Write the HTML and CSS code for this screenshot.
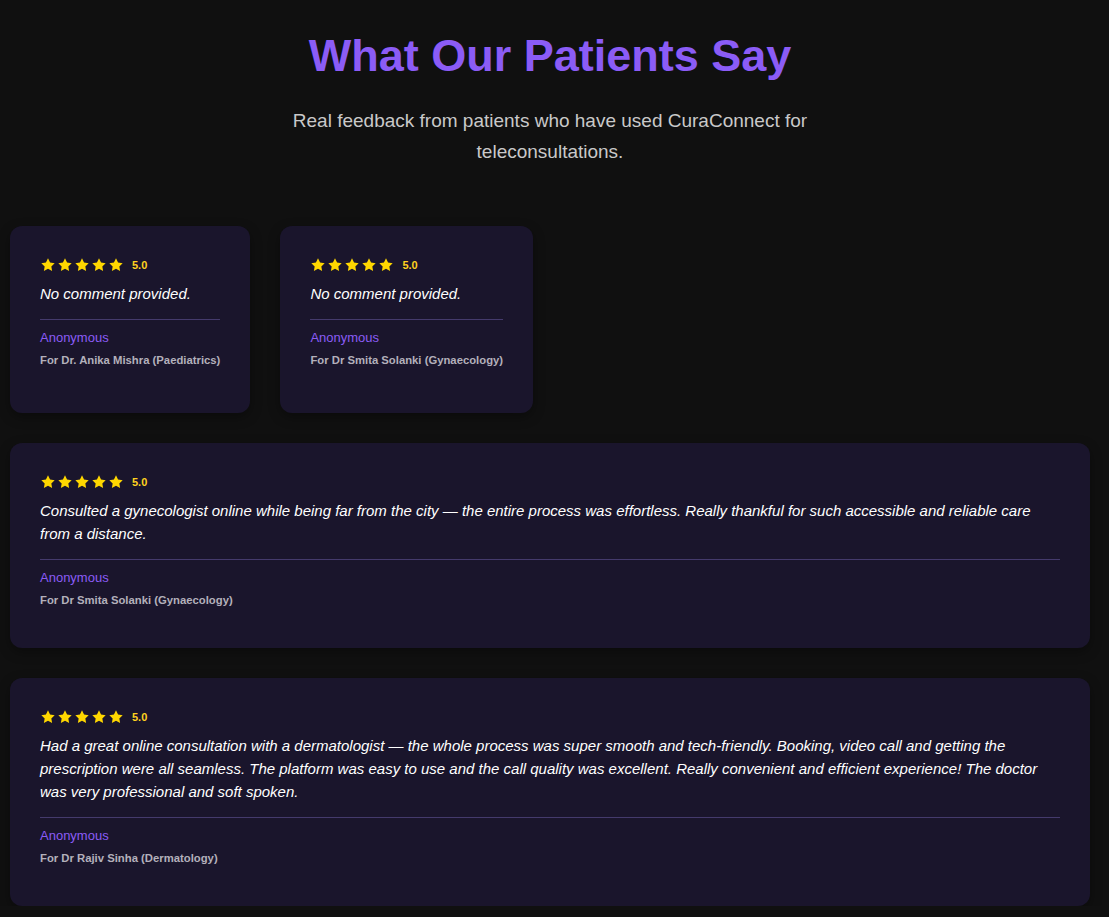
FILE: index.html
```html
<!DOCTYPE html>
<html lang="en">
<head>
<meta charset="utf-8">
<title>What Our Patients Say</title>
<link rel="stylesheet" href="styles.css">
</head>
<body>
<section class="testimonials">
  <header class="intro">
    <h1 class="intro-title">What Our Patients Say</h1>
    <p class="intro-sub">Real feedback from patients who have used CuraConnect for teleconsultations.</p>
  </header>

  <div class="cards">
    <article class="card">
      <div class="rating">
        <span class="stars">
          <svg class="star" viewBox="0 0 24 24"><path d="M12 2l3.09 6.26L22 9.27l-5 4.87 1.18 6.88L12 17.77l-6.18 3.25L7 14.14 2 9.27l6.91-1.01L12 2z"/></svg>
          <svg class="star" viewBox="0 0 24 24"><path d="M12 2l3.09 6.26L22 9.27l-5 4.87 1.18 6.88L12 17.77l-6.18 3.25L7 14.14 2 9.27l6.91-1.01L12 2z"/></svg>
          <svg class="star" viewBox="0 0 24 24"><path d="M12 2l3.09 6.26L22 9.27l-5 4.87 1.18 6.88L12 17.77l-6.18 3.25L7 14.14 2 9.27l6.91-1.01L12 2z"/></svg>
          <svg class="star" viewBox="0 0 24 24"><path d="M12 2l3.09 6.26L22 9.27l-5 4.87 1.18 6.88L12 17.77l-6.18 3.25L7 14.14 2 9.27l6.91-1.01L12 2z"/></svg>
          <svg class="star" viewBox="0 0 24 24"><path d="M12 2l3.09 6.26L22 9.27l-5 4.87 1.18 6.88L12 17.77l-6.18 3.25L7 14.14 2 9.27l6.91-1.01L12 2z"/></svg>
        </span>
        <span class="score">5.0</span>
      </div>
      <p class="comment">No comment provided.</p>
      <footer class="author">
        <div class="author-name">Anonymous</div>
        <div class="author-doctor">For Dr. Anika Mishra (Paediatrics)</div>
      </footer>
    </article>

    <article class="card">
      <div class="rating">
        <span class="stars">
          <svg class="star" viewBox="0 0 24 24"><path d="M12 2l3.09 6.26L22 9.27l-5 4.87 1.18 6.88L12 17.77l-6.18 3.25L7 14.14 2 9.27l6.91-1.01L12 2z"/></svg>
          <svg class="star" viewBox="0 0 24 24"><path d="M12 2l3.09 6.26L22 9.27l-5 4.87 1.18 6.88L12 17.77l-6.18 3.25L7 14.14 2 9.27l6.91-1.01L12 2z"/></svg>
          <svg class="star" viewBox="0 0 24 24"><path d="M12 2l3.09 6.26L22 9.27l-5 4.87 1.18 6.88L12 17.77l-6.18 3.25L7 14.14 2 9.27l6.91-1.01L12 2z"/></svg>
          <svg class="star" viewBox="0 0 24 24"><path d="M12 2l3.09 6.26L22 9.27l-5 4.87 1.18 6.88L12 17.77l-6.18 3.25L7 14.14 2 9.27l6.91-1.01L12 2z"/></svg>
          <svg class="star" viewBox="0 0 24 24"><path d="M12 2l3.09 6.26L22 9.27l-5 4.87 1.18 6.88L12 17.77l-6.18 3.25L7 14.14 2 9.27l6.91-1.01L12 2z"/></svg>
        </span>
        <span class="score">5.0</span>
      </div>
      <p class="comment">No comment provided.</p>
      <footer class="author">
        <div class="author-name">Anonymous</div>
        <div class="author-doctor">For Dr Smita Solanki (Gynaecology)</div>
      </footer>
    </article>

    <article class="card">
      <div class="rating">
        <span class="stars">
          <svg class="star" viewBox="0 0 24 24"><path d="M12 2l3.09 6.26L22 9.27l-5 4.87 1.18 6.88L12 17.77l-6.18 3.25L7 14.14 2 9.27l6.91-1.01L12 2z"/></svg>
          <svg class="star" viewBox="0 0 24 24"><path d="M12 2l3.09 6.26L22 9.27l-5 4.87 1.18 6.88L12 17.77l-6.18 3.25L7 14.14 2 9.27l6.91-1.01L12 2z"/></svg>
          <svg class="star" viewBox="0 0 24 24"><path d="M12 2l3.09 6.26L22 9.27l-5 4.87 1.18 6.88L12 17.77l-6.18 3.25L7 14.14 2 9.27l6.91-1.01L12 2z"/></svg>
          <svg class="star" viewBox="0 0 24 24"><path d="M12 2l3.09 6.26L22 9.27l-5 4.87 1.18 6.88L12 17.77l-6.18 3.25L7 14.14 2 9.27l6.91-1.01L12 2z"/></svg>
          <svg class="star" viewBox="0 0 24 24"><path d="M12 2l3.09 6.26L22 9.27l-5 4.87 1.18 6.88L12 17.77l-6.18 3.25L7 14.14 2 9.27l6.91-1.01L12 2z"/></svg>
        </span>
        <span class="score">5.0</span>
      </div>
      <p class="comment">Consulted a gynecologist online while being far from the city — the entire process was effortless. Really thankful for such accessible and reliable care from a distance.</p>
      <footer class="author">
        <div class="author-name">Anonymous</div>
        <div class="author-doctor">For Dr Smita Solanki (Gynaecology)</div>
      </footer>
    </article>

    <article class="card">
      <div class="rating">
        <span class="stars">
          <svg class="star" viewBox="0 0 24 24"><path d="M12 2l3.09 6.26L22 9.27l-5 4.87 1.18 6.88L12 17.77l-6.18 3.25L7 14.14 2 9.27l6.91-1.01L12 2z"/></svg>
          <svg class="star" viewBox="0 0 24 24"><path d="M12 2l3.09 6.26L22 9.27l-5 4.87 1.18 6.88L12 17.77l-6.18 3.25L7 14.14 2 9.27l6.91-1.01L12 2z"/></svg>
          <svg class="star" viewBox="0 0 24 24"><path d="M12 2l3.09 6.26L22 9.27l-5 4.87 1.18 6.88L12 17.77l-6.18 3.25L7 14.14 2 9.27l6.91-1.01L12 2z"/></svg>
          <svg class="star" viewBox="0 0 24 24"><path d="M12 2l3.09 6.26L22 9.27l-5 4.87 1.18 6.88L12 17.77l-6.18 3.25L7 14.14 2 9.27l6.91-1.01L12 2z"/></svg>
          <svg class="star" viewBox="0 0 24 24"><path d="M12 2l3.09 6.26L22 9.27l-5 4.87 1.18 6.88L12 17.77l-6.18 3.25L7 14.14 2 9.27l6.91-1.01L12 2z"/></svg>
        </span>
        <span class="score">5.0</span>
      </div>
      <p class="comment">Had a great online consultation with a dermatologist — the whole process was super smooth and tech-friendly. Booking, video call and getting the prescription were all seamless. The platform was easy to use and the call quality was excellent. Really convenient and efficient experience! The doctor was very professional and soft spoken.</p>
      <footer class="author">
        <div class="author-name">Anonymous</div>
        <div class="author-doctor">For Dr Rajiv Sinha (Dermatology)</div>
      </footer>
    </article>
  </div>
</section>
</body>
</html>
```

FILE: styles.css
```css
* {
  box-sizing: border-box;
}

html, body {
  margin: 0;
  padding: 0;
  background: #101010;
}

body {
  font-family: "Liberation Sans", Arial, sans-serif;
  color: #f2f2f2;
}

.testimonials {
  padding: 29px 19px 0 10px;
}

.intro {
  text-align: center;
  margin-bottom: 59px;
}

.intro-title {
  margin: 0;
  font-size: 45px;
  line-height: 54px;
  font-weight: 700;
  color: #8b5cf6;
}

.intro-sub {
  margin: 22px auto 0;
  max-width: 600px;
  font-size: 19px;
  line-height: 31px;
  color: #c9c9c9;
}

.cards {
  display: flex;
  flex-wrap: wrap;
  gap: 30px;
}

.card {
  flex: 0 1 auto;
  min-height: 187px;
  padding: 30px;
  background: #1a152c;
  border-radius: 12px;
  box-shadow: 0 4px 12px rgba(0, 0, 0, 0.35);
}

.rating {
  display: flex;
  align-items: center;
  height: 18px;
  margin-bottom: 8px;
}

.stars {
  display: flex;
  gap: 1px;
}

.star {
  width: 16px;
  height: 16px;
  fill: #ffd700;
  display: block;
}

.score {
  margin-left: 8px;
  font-size: 11px;
  font-weight: 700;
  color: #ffd21f;
}

.comment {
  margin: 0 0 14px;
  font-size: 15px;
  line-height: 23px;
  font-style: italic;
  color: #ffffff;
}

.author {
  border-top: 1px solid #443a6c;
  padding-top: 10px;
  padding-bottom: 11px;
}

.author-name {
  font-size: 13px;
  line-height: 15px;
  color: #8b5cf6;
}

.author-doctor {
  margin-top: 8px;
  font-size: 11.3px;
  line-height: 14px;
  font-weight: 700;
  color: #b3b0bb;
}
```
